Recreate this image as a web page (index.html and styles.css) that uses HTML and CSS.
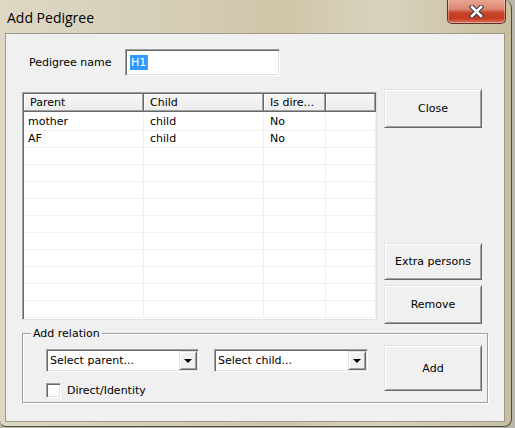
FILE: index.html
```html
<!DOCTYPE html>
<html lang="en">
<head>
    <meta charset="utf-8">
    <title>Add Pedigree</title>
    <link rel="stylesheet" href="styles.css">
</head>
<body>
    <div class="window">
        <div class="titlebar">
            <span class="title">Add Pedigree</span>
            <div class="close-x" title="Close">
                <svg width="15" height="13" viewBox="0 0 15 13">
                    <path d="M3 2 L12 11 M12 2 L3 11" stroke="#3c3c44" stroke-width="4.6" stroke-linecap="square" fill="none"/>
                    <path d="M3 2 L12 11 M12 2 L3 11" stroke="#ffffff" stroke-width="2.6" stroke-linecap="square" fill="none"/>
                </svg>
            </div>
        </div>

        <div class="client">
            <div class="name-row">
                <label class="name-label">Pedigree name</label>
                <div class="textbox"><span class="selected">H1</span></div>
            </div>

            <div class="main-row">
                <div class="listview">
                    <div class="lv-header">
                        <div class="hcell">Parent</div>
                        <div class="hcell">Child</div>
                        <div class="hcell">Is dire...</div>
                        <div class="hcell"></div>
                    </div>
                    <div class="lv-body">
                        <div class="lv-row"><div class="cell first">mother</div><div class="cell">child</div><div class="cell">No</div><div class="cell"></div></div>
                        <div class="lv-row"><div class="cell first">AF</div><div class="cell">child</div><div class="cell">No</div><div class="cell"></div></div>
                        <div class="lv-row"><div class="cell"></div><div class="cell"></div><div class="cell"></div><div class="cell"></div></div>
                        <div class="lv-row"><div class="cell"></div><div class="cell"></div><div class="cell"></div><div class="cell"></div></div>
                        <div class="lv-row"><div class="cell"></div><div class="cell"></div><div class="cell"></div><div class="cell"></div></div>
                        <div class="lv-row"><div class="cell"></div><div class="cell"></div><div class="cell"></div><div class="cell"></div></div>
                        <div class="lv-row"><div class="cell"></div><div class="cell"></div><div class="cell"></div><div class="cell"></div></div>
                        <div class="lv-row"><div class="cell"></div><div class="cell"></div><div class="cell"></div><div class="cell"></div></div>
                        <div class="lv-row"><div class="cell"></div><div class="cell"></div><div class="cell"></div><div class="cell"></div></div>
                        <div class="lv-row"><div class="cell"></div><div class="cell"></div><div class="cell"></div><div class="cell"></div></div>
                        <div class="lv-row"><div class="cell"></div><div class="cell"></div><div class="cell"></div><div class="cell"></div></div>
                        <div class="lv-row"><div class="cell"></div><div class="cell"></div><div class="cell"></div><div class="cell"></div></div>
                    </div>
                </div>

                <div class="side-buttons">
                    <div class="btn btn-close">Close</div>
                    <div class="spacer"></div>
                    <div class="btn btn-extra">Extra persons</div>
                    <div class="btn btn-remove">Remove</div>
                </div>
            </div>

            <div class="group">
                <span class="group-label">Add relation</span>
                <div class="relation-fields">
                    <div class="combo-row">
                        <div class="combo combo-parent">
                            <span class="combo-text">Select parent...</span>
                            <span class="drop"><span class="arrow"></span></span>
                        </div>
                        <div class="combo combo-child">
                            <span class="combo-text">Select child...</span>
                            <span class="drop"><span class="arrow"></span></span>
                        </div>
                    </div>
                    <div class="check-row">
                        <span class="checkbox"></span>
                        <span>Direct/Identity</span>
                    </div>
                </div>
                <div class="btn btn-add">Add</div>
            </div>
        </div>
    </div>
</body>
</html>
```

FILE: styles.css
```css
html, body {
    margin: 0;
    height: 100%;
}
body {
    background-color: #b9b6ae;
    font-family: "DejaVu Sans", Verdana, sans-serif;
    font-size: 11px;
    color: #000000;
    overflow: hidden;
}
.window {
    box-sizing: border-box;
    width: 512px;
    height: 427px;
    padding: 0 6px 0 5px;
    border-right: 1px solid #4e4b42;
    border-bottom: 1px solid #4e4b42;
    border-radius: 0 8px 8px 6px;
    background: linear-gradient(to right, #ddd7c4 0%, #d6cfb7 30%, #cfc6a9 55%, #d9d2bd 75%, #c8bf9f 100%);
}
.titlebar {
    display: flex;
    align-items: flex-start;
    height: 33px;
    padding-left: 2px;
}
.title {
    margin-top: 8px;
    font-family: "Open Sans", "Noto Sans", sans-serif;
    font-size: 14px;
    line-height: 19px;
    color: #000000;
}
.close-x {
    display: flex;
    align-items: center;
    justify-content: center;
    box-sizing: border-box;
    width: 59px;
    height: 24px;
    margin-left: auto;
    margin-right: -1px;
    border: 1px solid #5b3328;
    border-top: none;
    border-radius: 0 0 5px 5px;
    background: linear-gradient(to bottom, #e9a593 0%, #dc8670 40%, #c7452a 55%, #c63b21 80%, #d9735a 100%);
    box-shadow: inset 0 -1px 0 rgba(255,255,255,0.35), inset 1px 0 0 rgba(255,255,255,0.3), inset -1px 0 0 rgba(255,255,255,0.3);
}
.client {
    box-sizing: border-box;
    height: 389px;
    background-color: #f0f0f0;
    border: 1px solid #9c9889;
}

/* name row */
.name-row {
    display: flex;
    align-items: center;
    margin-top: 15px;
    padding-left: 23px;
}
.name-label {
    width: 96px;
}
.textbox {
    box-sizing: border-box;
    display: flex;
    align-items: center;
    width: 155px;
    height: 27px;
    padding-left: 4px;
    background: #ffffff;
    border: 1px solid;
    border-color: #a0a0a0 #ffffff #ffffff #a0a0a0;
    box-shadow: inset 1px 1px 0 #696969, inset -1px -1px 0 #e3e3e3;
}
.selected {
    background-color: #3399ff;
    color: #ffffff;
    line-height: 15px;
    padding: 0 1px;
    border-right: 1px solid #e07a2a;
}

/* list + buttons */
.main-row {
    display: flex;
    gap: 7px;
    margin-top: 13px;
    padding-left: 16px;
    height: 235px;
}
.listview {
    box-sizing: border-box;
    width: 355px;
    height: 228px;
    margin-top: 3px;
    background: #ffffff;
    border: 1px solid;
    border-color: #a0a0a0 #e3e3e3 #e3e3e3 #a0a0a0;
    box-shadow: inset 1px 1px 0 #696969;
    padding: 1px 0 0 1px;
    overflow: hidden;
}
.lv-header, .lv-row {
    display: grid;
    grid-template-columns: 120px 120px 62px 1fr;
}
.hcell {
    box-sizing: border-box;
    height: 18px;
    line-height: 17px;
    padding-left: 6px;
    background: linear-gradient(to bottom, #f6f6f6, #ececec);
    border-right: 1px solid #696969;
    border-bottom: 1px solid #696969;
    box-shadow: inset -1px -1px 0 #a0a0a0, inset 1px 1px 0 #ffffff;
    white-space: nowrap;
    overflow: hidden;
}
.lv-body {
    padding-top: 2px;
}
.cell {
    box-sizing: border-box;
    height: 17px;
    line-height: 16px;
    padding-left: 6px;
    border-right: 1px solid #f0f0f0;
    border-bottom: 1px solid #f0f0f0;
}
.cell.first {
    padding-left: 4px;
}
.side-buttons {
    display: flex;
    flex-direction: column;
    width: 98px;
}
.spacer {
    flex: 1;
}
.btn {
    box-sizing: border-box;
    display: flex;
    align-items: center;
    justify-content: center;
    width: 98px;
    background-color: #f0f0f0;
    border: 1px solid;
    border-color: #e3e3e3 #696969 #696969 #e3e3e3;
    box-shadow: inset 1px 1px 0 #ffffff, inset -1px -1px 0 #a0a0a0;
}
.btn-close {
    height: 39px;
}
.btn-extra {
    height: 37px;
    margin-bottom: 5px;
}
.btn-remove {
    height: 39px;
}

/* add relation group */
.group {
    position: relative;
    box-sizing: border-box;
    display: flex;
    align-items: flex-start;
    width: 466px;
    height: 70px;
    margin: 9px 0 0 16px;
    padding: 11px 5px 0 23px;
    border: 1px solid #a0a0a0;
    box-shadow: 1px 1px 0 #ffffff, inset 1px 1px 0 #ffffff;
}
.group-label {
    position: absolute;
    top: -8px;
    left: 8px;
    padding: 0 2px;
    background-color: #f0f0f0;
    line-height: 15px;
}
.relation-fields {
    margin-top: 4px;
}
.combo-row {
    display: flex;
    gap: 15px;
}
.combo {
    box-sizing: border-box;
    display: flex;
    align-items: center;
    height: 23px;
    padding: 1px;
    background: #ffffff;
    border: 1px solid;
    border-color: #a0a0a0 #ffffff #ffffff #a0a0a0;
    box-shadow: inset 1px 1px 0 #696969, inset -1px -1px 0 #e3e3e3;
}
.combo-parent {
    width: 153px;
}
.combo-child {
    width: 154px;
}
.combo-text {
    flex: 1;
    padding-left: 2px;
    white-space: nowrap;
    overflow: hidden;
}
.drop {
    box-sizing: border-box;
    display: flex;
    align-items: center;
    justify-content: center;
    width: 18px;
    height: 19px;
    background-color: #f0f0f0;
    border: 1px solid;
    border-color: #e3e3e3 #696969 #696969 #e3e3e3;
    box-shadow: inset 1px 1px 0 #ffffff, inset -1px -1px 0 #a0a0a0;
}
.arrow {
    width: 0;
    height: 0;
    border-left: 4px solid transparent;
    border-right: 4px solid transparent;
    border-top: 4px solid #000000;
}
.check-row {
    display: flex;
    align-items: center;
    gap: 6px;
    margin-top: 11px;
}
.checkbox {
    box-sizing: border-box;
    width: 15px;
    height: 15px;
    background: #ffffff;
    border: 1px solid;
    border-color: #a0a0a0 #ffffff #ffffff #a0a0a0;
    box-shadow: inset 1px 1px 0 #696969, inset -1px -1px 0 #e3e3e3;
}
.btn-add {
    height: 46px;
    margin-left: auto;
}
```
